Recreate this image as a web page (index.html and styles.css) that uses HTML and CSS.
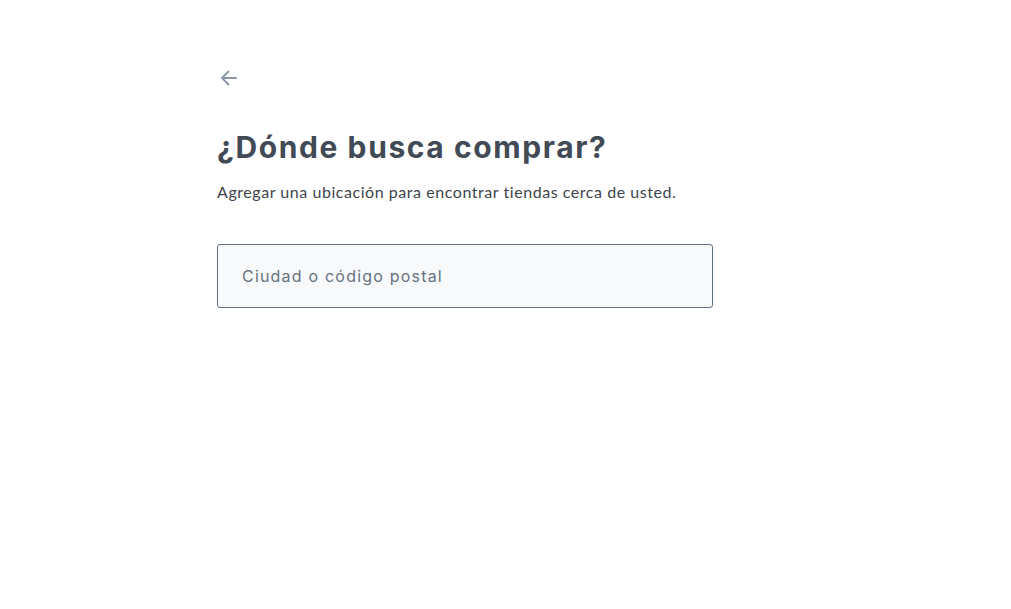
FILE: index.html
```html
<!DOCTYPE html>
<html lang="es">
  <head>
    <meta charset="UTF-8" />
    <meta name="viewport" content="width=device-width, initial-scale=1.0" />
    <title>Ubicación</title>
    <link rel="stylesheet" href="styles.css">
  </head>
  <body>
    <div class="location-container">
      <button class="back-btn" type="button" aria-label="Volver">
        <svg width="20" height="20" viewBox="0 0 20 20" fill="none" stroke="#8a96a8" stroke-width="1.8" stroke-linecap="round" stroke-linejoin="round">
          <path d="M17 10H3.5"/>
          <path d="M9.5 3.5L3 10l6.5 6.5"/>
        </svg>
      </button>
      <h1>¿Dónde busca comprar?</h1>
      <p class="subtitle">Agregar una ubicación para encontrar tiendas cerca de usted.</p>
      <input type="text" class="location-input" placeholder="Ciudad o código postal" />
    </div>
  </body>
</html>
```

FILE: styles.css
```css
body {
  font-family: Lato, "Open Sans", sans-serif;
  background-color: #fff;
  margin: 0;
}
.location-container {
  width: 496px;
  margin-left: 217px;
  padding-top: 67px;
}
.back-btn {
  background: none;
  border: none;
  padding: 0;
  margin-left: 2px;
  width: 24px;
  height: 22px;
  display: flex;
  align-items: center;
  cursor: pointer;
}
h1 {
  font-family: Inter, "Open Sans", sans-serif;
  font-weight: 700;
  font-size: 30px;
  letter-spacing: 1.6px;
  color: #414a55;
  margin: 40px 0 0;
  line-height: 36px;
}
.subtitle {
  font-size: 16px;
  color: #3d444c;
  margin: 17px 0 0;
  letter-spacing: 0.55px;
}
.location-input {
  display: block;
  box-sizing: border-box;
  width: 496px;
  height: 64px;
  margin-top: 43px;
  padding: 0 24px;
  border: 1px solid #5f6e80;
  border-radius: 3px;
  background-color: #f7f9fa;
  font-family: Inter, "Open Sans", sans-serif;
  font-size: 16px;
  letter-spacing: 1.2px;
  color: #333;
  outline: none;
}
.location-input::placeholder {
  color: #66727f;
}
```
